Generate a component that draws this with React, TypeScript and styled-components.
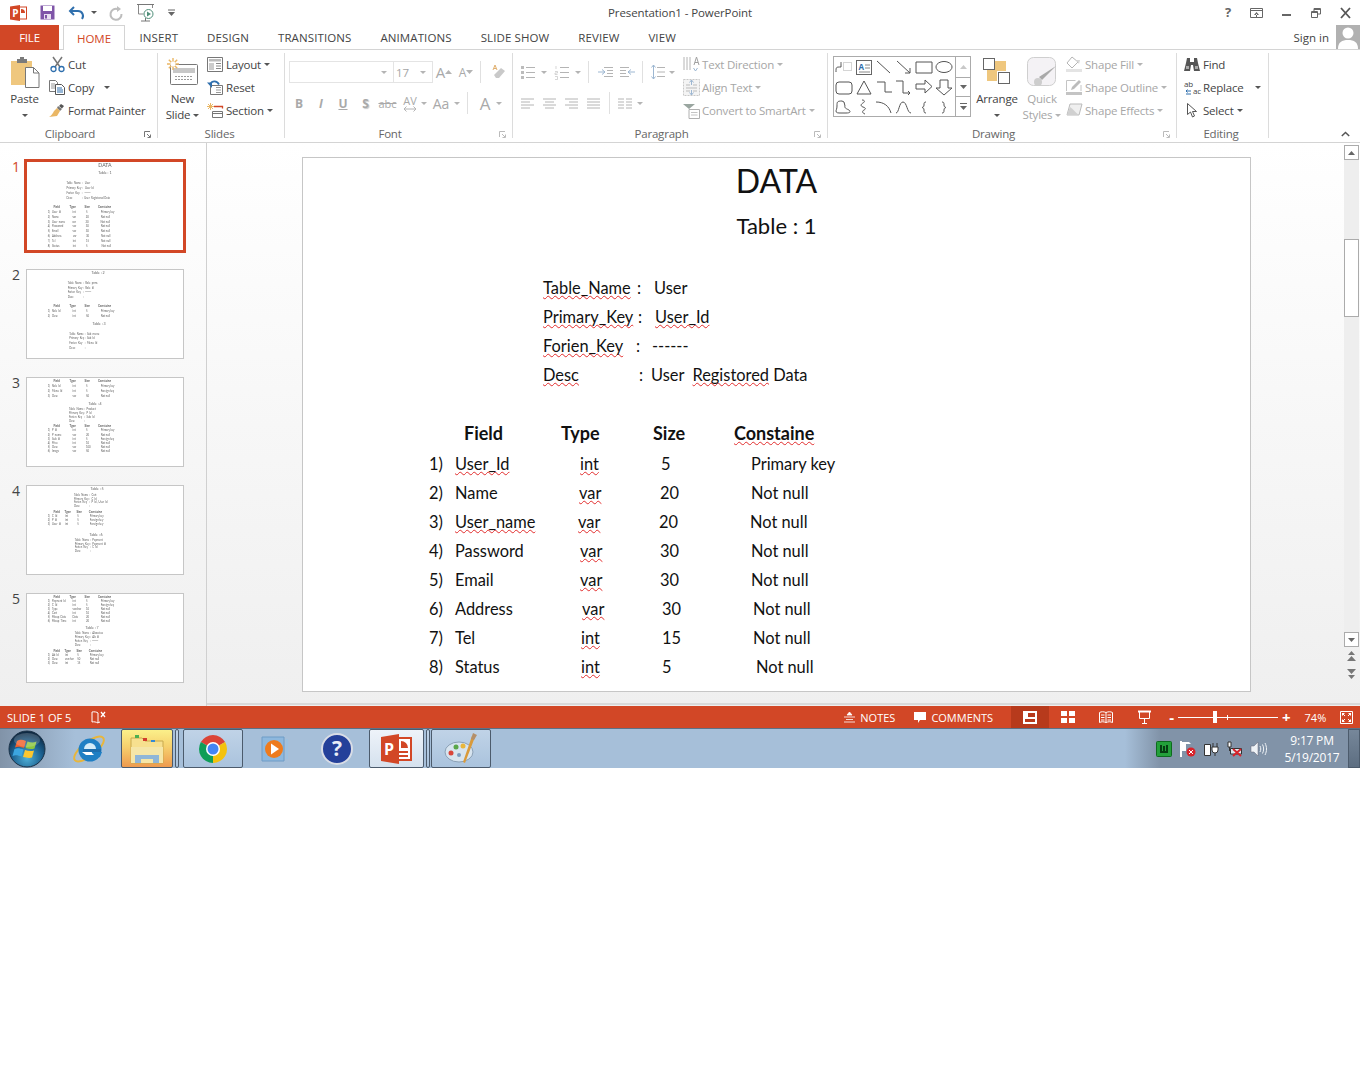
import React from "react";
import styled, { createGlobalStyle } from "styled-components";

const ORANGE = "#d24726";
const UI = `"Open Sans", "Noto Sans", "Liberation Sans", sans-serif`;
const DOC = `Lato, Carlito, "Liberation Sans", sans-serif`;

const Global = createGlobalStyle`
  html, body { margin: 0; padding: 0; background: #fff; }
  * { box-sizing: border-box; }
`;

const App = styled.div`
  width: 1360px;
  height: 768px;
  display: flex;
  flex-direction: column;
  overflow: hidden;
  font-family: ${UI};
  font-size: 11.5px;
  letter-spacing: -0.2px;
  color: #444;
  background: #fff;
`;

/* ---------- title bar ---------- */
const TitleBar = styled.div`
  height: 25px;
  display: grid;
  grid-template-columns: 1fr auto 1fr;
  align-items: center;
`;
const Qat = styled.div`
  display: flex;
  align-items: center;
  padding-left: 10px;
`;
const QatItem = styled.span<{ $w: number }>`
  width: ${(p) => p.$w}px;
  display: flex;
  align-items: center;
`;
const WindowTitle = styled.div`
  font-size: 11.5px;
  letter-spacing: -0.1px;
  color: #444;
`;
const WindowButtons = styled.div`
  display: flex;
  justify-content: flex-end;
  align-items: center;
  padding-right: 9px;
  gap: 19px;
`;

/* ---------- tabs ---------- */
const TabBar = styled.div`
  height: 25px;
  display: flex;
  border-bottom: 1px solid #d4d4d4;
`;
const FileTab = styled.div`
  width: 59px;
  height: 25px;
  background: ${ORANGE};
  color: #fff;
  display: flex;
  align-items: center;
  justify-content: center;
`;
const Tab = styled.div`
  height: 25px;
  padding: 0 14.5px;
  display: flex;
  align-items: center;
  letter-spacing: 0.1px;
`;
const ActiveTab = styled.div`
  width: 62px;
  height: 25px;
  margin-left: 4px;
  display: flex;
  align-items: center;
  justify-content: center;
  letter-spacing: 0;
  background: #fff;
  color: ${ORANGE};
  border: 1px solid #d4d4d4;
  border-bottom: 0;
`;
const SignIn = styled.div`
  margin-left: auto;
  display: flex;
  align-items: center;
  gap: 7px;
  height: 24px;
  letter-spacing: 0;
`;
const Avatar = styled.div`
  width: 24px;
  height: 24px;
  background: #b1b1b1;
`;

/* ---------- ribbon ---------- */
const Ribbon = styled.div`
  height: 93px;
  display: flex;
  align-items: flex-start;
  padding-top: 3px;
  border-bottom: 1px solid #d4d4d4;
`;
const Group = styled.div<{ $w: number }>`
  width: ${(p) => p.$w}px;
  height: 85px;
  border-right: 1px solid #dcdcdc;
  display: flex;
  flex-direction: column;
`;
const GroupBody = styled.div<{ $pad?: number }>`
  height: 75px;
  flex-shrink: 0;
  display: flex;
  padding-left: ${(p) => p.$pad ?? 0}px;
`;
const GroupFoot = styled.div`
  height: 12px;
  flex-shrink: 0;
  display: flex;
  align-items: center;
  padding-right: 3px;
`;
const GroupLabel = styled.div`
  flex: 1;
  text-align: center;
  line-height: 14px;
  color: #666;
`;
const Launcher = styled.span`
  width: 14px;
  display: flex;
  justify-content: center;
`;
const BigButton = styled.div<{ $w: number; $off?: boolean }>`
  width: ${(p) => p.$w}px;
  display: flex;
  flex-direction: column;
  align-items: center;
  color: ${(p) => (p.$off ? "#a6a6a6" : "#444")};
`;
const BigIcon = styled.div`
  height: 38px;
  display: flex;
  align-items: center;
  justify-content: center;
`;
const BigLine = styled.div`
  height: 16px;
  line-height: 16px;
  display: flex;
  align-items: center;
  gap: 3px;
  white-space: nowrap;
`;
const Stack = styled.div<{ $ml?: number }>`
  display: flex;
  flex-direction: column;
  margin-left: ${(p) => p.$ml ?? 0}px;
`;
const SmallButton = styled.div<{ $off?: boolean }>`
  height: 23px;
  display: flex;
  align-items: center;
  gap: 3px;
  white-space: nowrap;
  color: ${(p) => (p.$off ? "#a6a6a6" : "#444")};
`;
const IconBox = styled.span`
  width: 16px;
  height: 16px;
  display: flex;
  align-items: center;
  justify-content: center;
`;
const Caret = styled.span<{ $off?: boolean; $ml?: number }>`
  width: 0;
  height: 0;
  margin-left: ${(p) => p.$ml ?? 2}px;
  border-left: 3px solid transparent;
  border-right: 3px solid transparent;
  border-top: 3px solid ${(p) => (p.$off ? "#b4b4b4" : "#555")};
`;
const ToolColumn = styled.div<{ $w: number }>`
  width: ${(p) => p.$w}px;
  display: flex;
  flex-direction: column;
  padding-top: 8px;
  gap: 9px;
`;
const ToolRow = styled.div`
  height: 22px;
  display: flex;
  align-items: center;
`;
const FontBox = styled.div<{ $w: number }>`
  width: ${(p) => p.$w}px;
  height: 22px;
  border: 1px solid #e4e4e4;
  margin-right: -1px;
  display: flex;
  align-items: center;
  justify-content: space-between;
  padding: 0 6px 0 2px;
  color: #a6a6a6;
`;
const Slot = styled.span<{ $w: number; $ml?: number; $column?: boolean }>`
  width: ${(p) => p.$w}px;
  margin-left: ${(p) => p.$ml ?? 0}px;
  height: 22px;
  display: flex;
  flex-direction: ${(p) => (p.$column ? "column" : "row")};
  align-items: center;
  justify-content: center;
  color: #a9a9a9;
  font-weight: 600;
  flex-shrink: 0;
`;
const Glyph = styled.span<{
  $size?: number;
  $under?: boolean;
  $italic?: boolean;
  $strike?: boolean;
  $bold?: boolean;
  $shadow?: boolean;
  $tight?: boolean;
}>`
  font-size: ${(p) => p.$size ?? 12}px;
  font-style: ${(p) => (p.$italic ? "italic" : "normal")};
  font-weight: ${(p) => (p.$bold ? 700 : 400)};
  text-decoration: ${(p) => (p.$under ? "underline" : p.$strike ? "line-through" : "none")};
  text-shadow: ${(p) => (p.$shadow ? "1px 1px 1px #c8c8c8" : "none")};
  line-height: ${(p) => (p.$tight ? "11px" : "normal")};
  letter-spacing: 0;
`;
const ToolSep = styled.span<{ $mx: number }>`
  width: 1px;
  height: 22px;
  background: #e0e0e0;
  margin: 0 ${(p) => p.$mx}px;
  flex-shrink: 0;
`;
const Gallery = styled.div`
  margin: 3px 0 0 5px;
  width: 138px;
  height: 61px;
  border: 1px solid #ababab;
  display: flex;
`;
const ShapeGrid = styled.div`
  width: 121px;
  display: grid;
  grid-template-columns: repeat(6, 20px);
  grid-auto-rows: 20px;
`;
const ShapeCell = styled.span`
  display: flex;
  align-items: center;
  justify-content: center;
`;
const GalleryScroll = styled.div`
  flex: 1;
  display: grid;
  grid-template-rows: repeat(3, 1fr);
  border-left: 1px solid #ababab;
`;
const GalleryBtn = styled.span`
  display: flex;
  align-items: center;
  justify-content: center;
  & + & {
    border-top: 1px solid #ababab;
  }
`;
const Collapse = styled.div`
  margin-left: auto;
  height: 85px;
  padding: 0 10px 1px 0;
  display: flex;
  align-items: flex-end;
`;

/* ---------- main area ---------- */
const Main = styled.div`
  height: 563px;
  display: flex;
  background: linear-gradient(#fff, #efefef);
`;
const Sidebar = styled.div`
  width: 207px;
  border-right: 1px solid #d0d0d0;
  padding-top: 16px;
`;
const ThumbRow = styled.div`
  height: 108px;
  display: flex;
  align-items: flex-start;
`;
const ThumbNumber = styled.div<{ $on?: boolean }>`
  width: 24px;
  padding-left: 12px;
  font-size: 14px;
  line-height: 16px;
  letter-spacing: 0;
  color: ${(p) => (p.$on ? ORANGE : "#444")};
`;
const ThumbFrame = styled.div<{ $on?: boolean }>`
  background: #fff;
  overflow: hidden;
  margin: ${(p) => (p.$on ? "0" : "2px 0 0 2px")};
  width: ${(p) => (p.$on ? 162 : 158)}px;
  height: ${(p) => (p.$on ? 94 : 90)}px;
  border: ${(p) => (p.$on ? `3px solid ${ORANGE}` : "1px solid #c6c6c6")};
  --spell: transparent;
`;
const ThumbScale = styled.div`
  zoom: 0.1646;
  opacity: 0.7;
  filter: blur(1.6px);
`;
const Canvas = styled.div`
  flex: 1;
  display: flex;
  flex-direction: column;
`;
const CanvasRow = styled.div`
  height: 562px;
  display: flex;
  border-bottom: 2px solid #d9d9d9;
  padding-left: 95px;
`;
const SlideFrame = styled.div`
  margin-top: 14px;
  width: 949px;
  height: 535px;
  border: 1px solid #c6c6c6;
  background: #fff;
`;
const Slide = styled.div`
  width: 947px;
  height: 533px;
  overflow: hidden;
  font-family: ${DOC};
  color: #111;
  letter-spacing: 0;
  display: flex;
  flex-direction: column;
`;
const SlideTitle = styled.div`
  height: 46px;
  line-height: 46px;
  font-size: 32px;
  text-align: center;
  flex-shrink: 0;
`;
const Heading = styled.div<{ $top?: number; $shift?: number }>`
  height: 38px;
  line-height: 38px;
  font-size: 22px;
  text-align: center;
  flex-shrink: 0;
  margin-top: ${(p) => p.$top ?? 0}px;
  padding-right: ${(p) => p.$shift ?? 0}px;
`;
const Block = styled.div<{ $top: number; $left: number; $row?: number; $head?: number }>`
  margin-top: ${(p) => p.$top}px;
  padding-left: ${(p) => p.$left}px;
  display: grid;
  grid-auto-rows: ${(p) => p.$row ?? 29}px;
  grid-template-rows: ${(p) => (p.$head ? `${p.$head}px` : "none")};
  font-size: 16.4px;
  flex-shrink: 0;
`;
const MetaRow = styled.div`
  display: grid;
  grid-template-columns: 93px 12px 1fr;
  align-items: center;
  white-space: pre;
`;
const TableRow = styled.div<{ $isHead?: boolean; $narrow?: boolean }>`
  display: grid;
  grid-template-columns: ${(p) => (p.$narrow ? "26px 70px 78px 72px 1fr" : "26px 100px 97px 78px 1fr")};
  align-items: center;
  white-space: pre;
  font-weight: ${(p) => (p.$isHead ? 700 : 400)};
  font-size: ${(p) => (p.$isHead ? 18 : 16.4)}px;
`;
const Cell = styled.span<{ $nudge?: number }>`
  padding-left: ${(p) => p.$nudge ?? 0}px;
`;
const Spell = styled.span`
  text-decoration: underline wavy var(--spell, #e22c2c);
  text-decoration-thickness: 1px;
  text-decoration-skip-ink: none;
  text-underline-offset: 1px;
`;
const Scrollbar = styled.div`
  margin: 2px 0 0 auto;
  width: 16px;
  height: 558px;
  padding-right: 1px;
  display: flex;
  flex-direction: column;
`;
const ScrollBtn = styled.div<{ $plain?: boolean; $h?: number }>`
  height: ${(p) => p.$h ?? 15}px;
  flex-shrink: 0;
  display: flex;
  align-items: center;
  justify-content: center;
  background: ${(p) => (p.$plain ? "transparent" : "#fff")};
  border: ${(p) => (p.$plain ? "0" : "1px solid #ababab")};
`;
const ScrollTrack = styled.div<{ $h: number }>`
  height: ${(p) => p.$h}px;
  flex-shrink: 0;
  background: #eeeeee;
`;
const ScrollThumb = styled.div`
  height: 78px;
  flex-shrink: 0;
  background: #fff;
  border: 1px solid #ababab;
`;

/* ---------- status bar ---------- */
const StatusBar = styled.div`
  height: 22px;
  background: ${ORANGE};
  color: #fff;
  display: flex;
  align-items: center;
  font-size: 11px;
  letter-spacing: 0;
`;
const StatusItem = styled.div<{ $ml: number }>`
  margin-left: ${(p) => p.$ml}px;
  display: flex;
  align-items: center;
  gap: 5px;
  white-space: nowrap;
`;
const ViewButton = styled.div<{ $on?: boolean }>`
  width: 38px;
  height: 22px;
  display: flex;
  align-items: center;
  justify-content: center;
  background: ${(p) => (p.$on ? "#b73a1c" : "transparent")};
`;
const Views = styled.div`
  margin-left: 18px;
  display: flex;
`;
const ZoomTrack = styled.div`
  width: 100px;
  height: 1px;
  background: #fff;
  margin: 0 4px;
  display: flex;
  align-items: center;
`;
const ZoomThumb = styled.span`
  width: 4px;
  height: 12px;
  background: #fff;
  margin-left: 35px;
`;
const ZoomTick = styled.span`
  width: 1px;
  height: 5px;
  background: #fff;
  margin-left: 10px;
`;
const ZoomSign = styled.span`
  font-size: 15px;
  font-weight: 700;
  line-height: 12px;
`;

/* ---------- taskbar ---------- */
const Taskbar = styled.div`
  height: 40px;
  display: flex;
  align-items: stretch;
  background: linear-gradient(90deg, #8193a8 0, #a6bfd9 75px, #a6bfd9 1125px, #8193a8 1160px);
  border-top: 1px solid #5d7186;
`;
const TaskSlot = styled.div<{ $w: number; $ml?: number; $kind?: "plain" | "normal" | "active" | "light" }>`
  width: ${(p) => p.$w}px;
  margin-left: ${(p) => p.$ml ?? 0}px;
  display: flex;
  align-items: center;
  justify-content: center;
  border-radius: 2px;
  border: ${(p) => (p.$kind && p.$kind !== "plain" ? "1px solid #4c5b6c" : "0")};
  background: ${(p) =>
    p.$kind === "active"
      ? "linear-gradient(#fbf08a, #f6d06e 45%, #ee9a4e)"
      : p.$kind === "light"
        ? "linear-gradient(#eef3f9, #d5e1ee)"
        : p.$kind === "normal"
          ? "linear-gradient(#c0d3e7, #aac3dd)"
          : "transparent"};
`;
const Tray = styled.div`
  margin-left: auto;
  display: flex;
  align-items: center;
  gap: 8px;
`;
const Clock = styled.div`
  width: 72px;
  margin-left: 9px;
  text-align: center;
  font-size: 12px;
  line-height: 17px;
  letter-spacing: -0.2px;
  color: #fff;
  align-self: center;
`;
const ShowDesktop = styled.div`
  width: 12px;
  border: 1px solid #4c5b6c;
  background: linear-gradient(#76879a, #5d6e81);
`;

/* ---------- icons ---------- */
const Ico = styled.svg`
  display: block;
  flex-shrink: 0;
  overflow: visible;
`;

const PptSmall = () => (
  <Ico width="17" height="16" viewBox="0 0 17 16">
    <rect x="7" y="2" width="9.5" height="12" fill="#fff" stroke={ORANGE} />
    <path d="M11 4v4h4a4 4 0 0 0-4-4z" fill={ORANGE} />
    <path d="M0 1.5 10 0v16L0 14.5z" fill={ORANGE} />
    <text x="2.3" y="12" fontFamily={UI} fontSize="10" fontWeight="700" fill="#fff">P</text>
  </Ico>
);
const Save = () => (
  <Ico width="15" height="15" viewBox="0 0 15 15">
    <path d="M.5.500h14v14H.5z" fill="#7f55a8" />
    <rect x="3" y="1" width="9" height="5" fill="#fff" />
    <rect x="4" y="9" width="7" height="5" fill="#e8e0f0" />
    <rect x="5" y="10" width="2" height="3.5" fill="#7f55a8" />
  </Ico>
);
const Undo = () => (
  <Ico width="16" height="14" viewBox="0 0 16 14">
    <path d="M5 1 1 5l4 4" fill="none" stroke="#2f6fad" strokeWidth="2" />
    <path d="M2 5h7a5 5 0 0 1 4 8" fill="none" stroke="#2f6fad" strokeWidth="2" />
  </Ico>
);
const Redo = () => (
  <Ico width="14" height="14" viewBox="0 0 14 14">
    <path d="M9 3.2A5.5 5.5 0 1 0 12.5 8" fill="none" stroke="#bdbdbd" strokeWidth="2" />
    <path d="M8 0v6l4-3z" fill="#bdbdbd" />
  </Ico>
);
const Show = () => (
  <Ico width="17" height="18" viewBox="0 0 17 18">
    <path d="M0 .5h17" stroke="#777" />
    <path d="M1.500 1v9h5M15.500 1v3" stroke="#888" fill="none" />
    <circle cx="11.500" cy="10" r="4.500" fill="#fff" stroke="#4f8f79" />
    <path d="M10 7.500v5l4-2.500z" fill="#4f8f79" />
    <path d="M4 17h9M8.500 14v3" stroke="#777" />
  </Ico>
);
const QatMore = () => (
  <Ico width="7" height="7" viewBox="0 0 7 7">
    <path d="M0 1h7" stroke="#666" />
    <path d="M0 3h7L3.500 7z" fill="#666" />
  </Ico>
);
const HelpMark = styled.span`
  font-size: 13px;
  font-weight: 700;
  color: #666;
  line-height: 13px;
`;
const RibbonOpts = () => (
  <Ico width="13" height="10" viewBox="0 0 13 10">
    <path d="M.5.500h12v9H.5zM.5 2.500h12" fill="none" stroke="#666" />
    <path d="M6.500 4 4 7h5zM6 6h1v3H6z" fill="#666" />
  </Ico>
);
const Minimize = () => (
  <Ico width="10" height="10" viewBox="0 0 10 10"><path d="M0 6h9v2H0z" fill="#666" /></Ico>
);
const Restore = () => (
  <Ico width="10" height="10" viewBox="0 0 10 10">
    <path d="M.5 3.500h6v6h-6zM.5 4.500h6M3 3V.5h6.500V6H7M3 1.500h6.500" fill="none" stroke="#666" />
  </Ico>
);
const CloseX = () => (
  <Ico width="11" height="10" viewBox="0 0 11 10">
    <path d="m1 0 9 10M10 0 1 10" stroke="#555" strokeWidth="1.800" />
  </Ico>
);
const PasteIcon = () => (
  <Ico width="30" height="32" viewBox="0 0 30 32">
    <path d="M1 5h21v24H1z" fill="#efc77e" />
    <path d="M7 3h3V1h4v2h3v4H7z" fill="#7b7b7b" />
    <path d="M15.500 11.500h8l5.500 5.500v14.500H15.500z" fill="#fff" stroke="#777" />
    <path d="M23.500 11.500V17H29" fill="none" stroke="#777" />
  </Ico>
);
const CutIcon = () => (
  <Ico width="15" height="15" viewBox="0 0 15 15">
    <path d="M3 0l7 10M12 0 5 10" stroke="#777" strokeWidth="1.500" />
    <circle cx="3.500" cy="12" r="2.500" fill="none" stroke="#2f6fad" strokeWidth="1.300" />
    <circle cx="11.500" cy="12" r="2.500" fill="none" stroke="#2f6fad" strokeWidth="1.300" />
  </Ico>
);
const CopyIcon = () => (
  <Ico width="16" height="15" viewBox="0 0 16 15">
    <path d="M.5.500h6l2 2v9h-8z" fill="#fff" stroke="#777" />
    <path d="M6.500 4.500h6l3 3v7h-9z" fill="#fff" stroke="#555" />
    <path d="M8 8h5M8 10h6M8 12h6" stroke="#2f6fad" />
    <path d="M2 4h4M2 6h4M2 8h4" stroke="#999" />
  </Ico>
);
const PainterIcon = () => (
  <Ico width="16" height="15" viewBox="0 0 16 15">
    <path d="M9 3l4 3-2 2-3-3z" fill="#777" />
    <path d="M12 1l3 2-2 2.500-3-2.500z" fill="#555" />
    <path d="M8 5l3 3-3 5-8 1c2-1 4-4 5-6z" fill="#eab765" />
  </Ico>
);
const NewSlideIcon = () => (
  <Ico width="31" height="28" viewBox="0 0 31 28">
    <rect x="3.500" y="6.500" width="27" height="20" rx="1" fill="#fff" stroke="#777" />
    <rect x="6" y="10" width="22" height="5" fill="#c8c8c8" />
    <path d="M8 18.500h18M8 21.500h18" stroke="#9a9a9a" strokeDasharray="2 1" />
    <g stroke="#eab765" strokeWidth="1.400">
      <path d="M6 0v12M0 6h12M1.800 1.800l8.400 8.400M10.200 1.800l-8.400 8.400" />
    </g>
    <circle cx="6" cy="6" r="2.500" fill="#fff" />
  </Ico>
);
const LayoutIcon = () => (
  <Ico width="16" height="15" viewBox="0 0 16 15">
    <path d="M.5.500h15v14H.5z" fill="#fff" stroke="#777" />
    <path d="M2 2h12v2.500H2z" fill="#bbb" />
    <path d="M2 6h5v7H2z" fill="#ccc" />
    <path d="M9 6.500h5M9 9h5M9 11.500h5" stroke="#888" />
  </Ico>
);
const ResetIcon = () => (
  <Ico width="16" height="15" viewBox="0 0 16 15">
    <path d="M3.500 5.500h12v9h-12z" fill="#fff" stroke="#777" />
    <path d="M9 7.500h5M9 10h5M9 12.500h5" stroke="#999" />
    <path d="M12 4.500C10 .5 5 .5 3.500 4" fill="none" stroke="#2f6fad" strokeWidth="1.800" />
    <path d="M0 2.500l5 5.500V2.500z" fill="#2f6fad" />
  </Ico>
);
const SectionIcon = () => (
  <Ico width="16" height="15" viewBox="0 0 16 15">
    <g stroke="#eab765"><path d="M3.500 0v7M0 3.500h7M1 1l5 5M6 1 1 6" /></g>
    <path d="M7 3.500h8.500v2" fill="none" stroke={ORANGE} strokeWidth="1.300" />
    <path d="M5.500 8.500h10v6h-10zM5.500 10.500h10" fill="#fff" stroke="#777" />
  </Ico>
);
const EraserIcon = () => (
  <Ico width="15" height="16" viewBox="0 0 15 16">
    <path d="M3 11 10 4l4 3-6 7H5z" fill="#c9c9c9" />
    <path d="M2 6l2-5 2 5M3 4.500h2" fill="none" stroke="#e0b070" />
  </Ico>
);
const Lines = ({ kind }: { kind: "left" | "center" | "right" | "justify" }) => {
  const rows: Record<string, string> = {
    left: "M0 1h13M0 4h9M0 7h13M0 10h9",
    center: "M0 1h13M2 4h9M0 7h13M2 10h9",
    right: "M0 1h13M4 4h9M0 7h13M4 10h9",
    justify: "M0 1h13M0 4h13M0 7h13M0 10h13",
  };
  return (
    <Ico width="14" height="11" viewBox="0 0 14 11">
      <path d={rows[kind]} stroke="#b4b4b4" />
    </Ico>
  );
};
const Bullets = ({ numbered }: { numbered?: boolean }) => (
  <Ico width="14" height="15" viewBox="0 0 14 15">
    <path d="M5 2.500h9M5 7.500h9M5 12.500h9" stroke="#b4b4b4" />
    {numbered ? (
      <path d="M1 1v3M0 6.500h2.500V8H0v1.500h2.500M0 11.500h2.500v3H0" stroke="#c4c4c4" fill="none" strokeWidth=".7" />
    ) : (
      <path d="M0 1h3v3H0zM0 6h3v3H0zM0 11h3v3H0z" fill="#bcbcbc" />
    )}
  </Ico>
);
const IndentMark = styled(Ico)<{ $flip?: boolean }>`
  transform: ${(p) => (p.$flip ? "scaleX(-1)" : "none")};
`;
const Indent = ({ flip }: { flip?: boolean }) => (
  <IndentMark $flip={flip} width="15" height="12" viewBox="0 0 15 12">
    <path d="M6 1.500h9M9 4.500h6M9 7.500h6M6 10.500h9" stroke="#b4b4b4" />
    <path d="M0 6h7M4 3.500 7 6 4 8.500" fill="none" stroke="#9db7d2" />
  </IndentMark>
);
const Spacing = () => (
  <Ico width="14" height="16" viewBox="0 0 14 16">
    <path d="M6 3.500h8M6 8h8M6 12.500h8" stroke="#b4b4b4" />
    <path d="M2.500 1v14M.5 3.500l2-2.500 2 2.500M.5 12.500l2 2.500 2-2.500" fill="none" stroke="#9db7d2" />
  </Ico>
);
const ColumnsIcon = () => (
  <Ico width="14" height="11" viewBox="0 0 14 11">
    <path d="M0 1h6M8 1h6M0 4h6M8 4h6M0 7h6M8 7h6M0 10h6M8 10h6" stroke="#b4b4b4" />
  </Ico>
);
const SpreadArrow = () => (
  <Ico width="14" height="6" viewBox="0 0 14 6">
    <path d="M1 3h12M3.500 .5 1 3l2.500 2.500M10.500 .5 13 3l-2.500 2.500" fill="none" stroke="#b4b4b4" />
  </Ico>
);
const TextDirIcon = () => (
  <Ico width="17" height="17" viewBox="0 0 17 17">
    <path d="M1 1v13M4 1v13M7 1v13" stroke="#b4b4b4" />
    <path d="M11 9l2.500-8L16 9M12 6.500h3" fill="none" stroke="#a0a0a0" />
    <path d="M10.500 12l2 3 2-3" stroke="#9db7d2" fill="none" />
  </Ico>
);
const AlignIcon = () => (
  <Ico width="17" height="17" viewBox="0 0 17 17">
    <path d="M.5.500h16v16H.500z" fill="#f4f4f4" stroke="#c8c8c8" strokeDasharray="2 1" />
    <path d="M3 6h4M10 6h4M3 9h11M3 12h4M10 12h4" stroke="#bbb" />
    <path d="M8.500 1v5M6.500 3.500l2-2.500 2 2.500M8.500 16v-5M6.500 13.500l2 2.500 2-2.500" fill="none" stroke="#9db7d2" />
  </Ico>
);
const SmartArtIcon = () => (
  <Ico width="17" height="17" viewBox="0 0 17 17">
    <path d="M0 2h12l-6 5z" fill="#9aa6a0" />
    <path d="M6 7.500h10.500v9H6z" fill="#fff" stroke="#b0b0b0" />
    <path d="M8 10.500h6.500M8 13h6.500" stroke="#c4c4c4" />
  </Ico>
);
const shapes = [
  "M1 13c0-5 0-5 5-5 0-3 0-5 0-5M6 3",
  "",
  "M2 2l13 12",
  "M2 2l13 12M15 9v5h-5",
  "M1 3h16v11H1z",
  "M9 2.500a8 5.500 0 1 0 .01 0z",
  "M4 3h10q3 0 3 3v6q0 3-3 3H4q-3 0-3-3V6q0-3 3-3z",
  "M9 2l7 13H2z",
  "M2 3h8v10h7",
  "M1 2h7v12h7M13 12l2 2-2 2",
  "M1 5h9V1l7 6.500-7 6.500v-4H1z",
  "M5 1h8v8h4l-8 7-8-7h4z",
  "M7 2c-5 0-5 1-5 5 0 3-1 4-1 5 0 2 2 2 5 2h5c4 0 5-1 3-3-2-1-5-2-4-4l-1-4z",
  "M7 1c3 0 3 2 1 3s-3 3 0 4 3 2 1 3-2 3 1 4",
  "M1 3c8 0 13 4 15 11",
  "M1 14c3 0 3-11 7-11s4 11 8 11",
  "M11 3c-2 0-2 1-2 3s-1 2-2 2.500c1 .5 2 .5 2 2.500s0 3 2 3",
  "M7 3c2 0 2 1 2 3s1 2 2 2.500c-1 .5-2 .5-2 2.500s0 3-2 3",
];
const ShapeIcon = ({ d, idx }: { d: string; idx: number }) => (
  <Ico width="18" height="17" viewBox="0 0 18 17">
    {idx === 0 && <rect x="8.500" y="3.500" width="8" height="8" fill="none" stroke="#aaa" strokeDasharray="1 1" />}
    {idx === 1 ? (
      <>
        <rect x="1.500" y="1.500" width="15" height="14" fill="#fff" stroke="#666" />
        <text x="3.500" y="11" fontFamily={UI} fontSize="8" fontWeight="700" fill="#2f6fad">A</text>
        <path d="M10 6h5M10 9h5M4 13h11" stroke="#888" />
      </>
    ) : (
      <path d={d} fill="none" stroke="#555" />
    )}
  </Ico>
);
const Tri = ({ up, color = "#666", bar }: { up?: boolean; color?: string; bar?: boolean }) => (
  <Ico width="7" height={bar ? 7 : 4} viewBox={bar ? "0 0 7 7" : "0 0 7 4"}>
    {bar && <path d="M0 .5h7" stroke={color} />}
    <path d={bar ? "M0 3h7L3.500 7z" : up ? "M3.500 0 7 4H0z" : "M0 0h7L3.500 4z"} fill={color} />
  </Ico>
);
const ArrangeIcon = () => (
  <Ico width="28" height="28" viewBox="0 0 28 28">
    <rect x=".5" y=".5" width="11" height="11" fill="#fff" stroke="#666" />
    <path d="M12 3h11v10H12zM4 12h10v11H4z" fill="#efc77e" />
    <rect x="15.500" y="14.500" width="11" height="11" fill="#fff" stroke="#666" />
  </Ico>
);
const QuickIcon = () => (
  <Ico width="30" height="30" viewBox="0 0 30 30">
    <rect x=".5" y=".5" width="28" height="28" rx="6" fill="#f4f2f5" stroke="#cfcfcf" />
    <path d="M29 9 15 23l-3-3z" fill="#a9a9a9" />
    <circle cx="11" cy="25" r="4" fill="#cdcdcd" />
  </Ico>
);
const FillIcon = () => (
  <Ico width="17" height="17" viewBox="0 0 17 17">
    <path d="M6 1 1 7l5 5 6-6z" fill="#fff" stroke="#b4b4b4" />
    <path d="M10 4l3 4 1-4z" fill="#d8d8d8" />
    <rect y="13" width="16" height="3" fill="#e4e4e4" />
  </Ico>
);
const OutlineIcon = () => (
  <Ico width="17" height="17" viewBox="0 0 17 17">
    <path d="M.5 12V1.500h9M15 6v6" fill="none" stroke="#c4c4c4" />
    <path d="M13 1l2 2-7 7-3 1 1-3z" fill="#bcbcbc" />
    <rect y="13" width="16" height="3" fill="#c4c4c4" />
  </Ico>
);
const EffectsIcon = () => (
  <Ico width="17" height="17" viewBox="0 0 17 17">
    <path d="M4 2h12l-3 11H1z" fill="#efefef" stroke="#bbb" />
    <path d="M1 13 4 5c3 2 6 6 9 8z" fill="#d0d0d0" />
  </Ico>
);
const FindIcon = () => (
  <Ico width="16" height="15" viewBox="0 0 16 15">
    <path d="M3 1h3v4h4V1h3l1 5 2 8h-6l-1-6H7l-1 6H0l2-8z" fill="#555" />
    <path d="M2 9h3v3H2zM11 9h3v3h-3z" fill="#fff" opacity=".5" />
  </Ico>
);
const ReplaceIcon = () => (
  <Ico width="17" height="19" viewBox="0 0 17 19">
    <text x="0" y="9" fontFamily={UI} fontSize="8" fill="#444">ab</text>
    <text x="9" y="16" fontFamily={UI} fontSize="8" fill="#444">ac</text>
    <path d="M7 13H2M3.500 11.500 2 13l1.500 1.500M7 16H2" fill="none" stroke="#2f6fad" />
  </Ico>
);
const SelectIcon = () => (
  <Ico width="11" height="15" viewBox="0 0 11 15">
    <path d="M.5.500v11l3-2.500 2 5 2-1-2-4.500h4z" fill="#fff" stroke="#555" />
  </Ico>
);
const LauncherIcon = ({ off }: { off?: boolean }) => (
  <Ico width="7" height="7" viewBox="0 0 7 7">
    <path d="M.5 6V.5H6" fill="none" stroke={off ? "#bbb" : "#777"} />
    <path d="M3 3l3 3M3.500 6.500h3v-3" fill="none" stroke={off ? "#bbb" : "#777"} />
  </Ico>
);
const Chevron = () => (
  <Ico width="9" height="6" viewBox="0 0 9 6">
    <path d="M.8 5 4.500 1.500 8.200 5" fill="none" stroke="#555" strokeWidth="1.500" />
  </Ico>
);
const DoubleMark = styled(Ico)<{ $down?: boolean }>`
  transform: ${(p) => (p.$down ? "scaleY(-1)" : "none")};
`;
const DoubleArrow = ({ down }: { down?: boolean }) => (
  <DoubleMark $down={down} width="9" height="10" viewBox="0 0 9 10">
    <path d="M4.500 0 8 4H1zM4.500 5 9 10H0z" fill="#777" />
  </DoubleMark>
);
const SpellBook = () => (
  <Ico width="15" height="15" viewBox="0 0 15 15">
    <path d="M7 3C6 2 3 1.500 1 2v10c2-.5 4 0 6 1 .5-.5 1-.8 2-1M7 3v10" fill="none" stroke="#fff" />
    <path d="M10 2l4 5M14 2l-4 5" stroke="#fff" strokeWidth="1.300" />
  </Ico>
);
const NotesIcon = () => (
  <Ico width="11" height="11" viewBox="0 0 11 11">
    <path d="M5.500 0 8 3H3zM0 5h11M2 7.500h7M0 10h11" fill="#fff" stroke="#fff" strokeWidth=".8" />
  </Ico>
);
const CommentIcon = () => (
  <Ico width="12" height="11" viewBox="0 0 12 11"><path d="M0 0h12v8H6l-2 3V8H0z" fill="#fff" /></Ico>
);
const ViewNormal = () => (
  <Ico width="14" height="13" viewBox="0 0 14 13">
    <path d="M0 0h14v13H0z" fill="#fff" />
    <path d="M5 2h7v4H5zM2 8h10v3H2z" fill="#b73a1c" />
  </Ico>
);
const ViewSorter = () => (
  <Ico width="14" height="12" viewBox="0 0 14 12">
    <path d="M0 0h6v5H0zM8 0h6v5H8zM0 7h6v5H0zM8 7h6v5H8z" fill="#fff" />
  </Ico>
);
const ViewReading = () => (
  <Ico width="14" height="13" viewBox="0 0 14 13">
    <path d="M.5 1.500c2-1 4-1 6.500 0 2.500-1 4.500-1 6.500 0v10c-2-1-4-1-6.500 0-2.500-1-4.500-1-6.500 0zM7 1.500v10M2 4h3.500M2 6.500h3.500M2 9h3.500M8.500 4H12M8.500 6.500H12M8.500 9H12" fill="none" stroke="#fff" />
  </Ico>
);
const ViewShow = () => (
  <Ico width="13" height="13" viewBox="0 0 13 13">
    <path d="M0 .5h13" stroke="#fff" strokeWidth="2" />
    <path d="M1.500 1v6.500h10V1M6.500 8v4M4 12.500h5" fill="none" stroke="#fff" />
  </Ico>
);
const FitIcon = () => (
  <Ico width="13" height="13" viewBox="0 0 13 13">
    <path d="M.5.500h12v12H.5z" fill="none" stroke="#fff" />
    <path d="M3 3l2 2M10 3 8 5M3 10l2-2M10 10 8 8" stroke="#fff" />
    <path d="M2 2h3L2 5zM11 2H8l3 3zM2 11h3l-3-3zM11 11H8l3-3z" fill="#fff" />
  </Ico>
);
const Orb = () => (
  <Ico width="38" height="38" viewBox="0 0 38 38">
    <defs>
      <radialGradient id="orb" cx=".5" cy=".75" r=".7">
        <stop offset="0" stopColor="#4fb0d8" />
        <stop offset=".6" stopColor="#1b5f8e" />
        <stop offset="1" stopColor="#0e2a44" />
      </radialGradient>
    </defs>
    <circle cx="19" cy="19" r="18" fill="url(#orb)" stroke="#1b3146" />
    <path d="M9 11c3-2 6-1 9 0l-2 7c-3-1-6-2-9-.500z" fill="#f0602a" />
    <path d="M19.500 11.500c3 1 6 1.500 9 0l-2 7c-3 1-6 .500-9-.500z" fill="#8cc63f" />
    <path d="M6.500 19c3-1.500 6-.500 9 .500l-2 7c-3-1-6-2-9-.500z" fill="#3ca6e0" />
    <path d="M17 20c3 1 6 1.500 9 .500l-2 7c-3 1-6 0-9-.500z" fill="#fdc72e" />
    <ellipse cx="19" cy="10" rx="13" ry="7" fill="#fff" opacity=".18" />
  </Ico>
);
const IeIcon = () => (
  <Ico width="34" height="34" viewBox="0 0 34 34">
    <ellipse cx="17" cy="17" rx="18" ry="7" transform="rotate(-38 17 17)" fill="none" stroke="#e8b63c" strokeWidth="2" />
    <circle cx="18" cy="18" r="11.500" fill="#1f7fc4" />
    <circle cx="18" cy="17" r="6" fill="#d5ecf8" />
    <rect x="11" y="17" width="18" height="3" fill="#1d6eae" />
    <path d="M20 20h10l-2 5-8 3z" fill="#1f7fc4" />
    <path d="M10 20h9l3 3h-8z" fill="#fff" />
  </Ico>
);
const FolderIcon = () => (
  <Ico width="34" height="30" viewBox="0 0 34 30">
    <path d="M1 4h11l3 3h18v22H1z" fill="#f7e08f" stroke="#c8a94f" />
    <rect x="5" y="1" width="4" height="3" fill="#4caf50" />
    <rect x="13" y="4" width="4" height="3" fill="#d23c2c" />
    <rect x="21" y="6" width="4" height="2" fill="#3389d4" />
    <path d="M1 13h32v16H1z" fill="#f5e6a8" />
    <path d="M5 29V21h24v8h-6v-4H11v4z" fill="#8fb6d8" />
  </Ico>
);
const ChromeIcon = () => (
  <Ico width="30" height="30" viewBox="0 0 30 30">
    <path d="M15 15 2.880 8A14 14 0 0 1 27.120 8z" fill="#db4437" />
    <path d="M15 15 27.120 8A14 14 0 0 1 15 29z" fill="#f4c20d" />
    <path d="M15 15 15 29A14 14 0 0 1 2.880 8z" fill="#0f9d58" />
    <circle cx="15" cy="15" r="7" fill="#fff" />
    <circle cx="15" cy="15" r="5.500" fill="#4285f4" />
  </Ico>
);
const MediaIcon = () => (
  <Ico width="30" height="26" viewBox="0 0 30 26">
    <path d="M0 1h22v24H0z" fill="#8db8de" stroke="#6e9cc6" />
    <path d="M24 3h2v20h-2z" fill="#9dc1e0" />
    <circle cx="12" cy="13" r="9" fill="#ee7b1d" />
    <path d="M9 7.500v11l8-5.500z" fill="#fff" />
  </Ico>
);
const HelpIcon = () => (
  <Ico width="32" height="32" viewBox="0 0 32 32">
    <circle cx="16" cy="16" r="15" fill="#24409a" stroke="#d9dde6" strokeWidth="2" />
    <text x="16" y="23" textAnchor="middle" fontFamily={UI} fontSize="21" fontWeight="700" fill="#e8edf7">?</text>
  </Ico>
);
const PptIcon = () => (
  <Ico width="31" height="30" viewBox="0 0 31 30">
    <rect x="12" y="4" width="18" height="22" fill="#fff" stroke={ORANGE} strokeWidth="2" />
    <path d="M20 7v7h7a7 7 0 0 0-7-7z" fill={ORANGE} />
    <path d="M16 17h11v2H16zM16 21h11v2H16z" fill={ORANGE} />
    <path d="M0 3 18 0v30L0 27z" fill={ORANGE} />
    <text x="3" y="21" fontFamily={UI} fontSize="16" fontWeight="700" fill="#fff">P</text>
  </Ico>
);
const PaintIcon = () => (
  <Ico width="33" height="32" viewBox="0 0 33 32">
    <ellipse cx="14" cy="19" rx="14" ry="10" fill="#d7e4ef" stroke="#8aa0b5" />
    <circle cx="6" cy="20" r="2.500" fill="#d9453a" />
    <circle cx="11" cy="14" r="2.500" fill="#5aa74a" />
    <circle cx="18" cy="13" r="2.500" fill="#e8b63c" />
    <circle cx="14" cy="22" r="2" fill="#7a9cc0" />
    <path d="M30 4 20 30l-2-1L27 3z" fill="#d99a3a" />
    <path d="M26 6l2-6 4 2-3 5z" fill="#b48f6a" />
  </Ico>
);
const TrayW = () => (
  <Ico width="16" height="16" viewBox="0 0 16 16">
    <rect x=".5" y=".5" width="15" height="15" rx="1" fill="#23a03a" stroke="#0d6b1e" />
    <path d="M4 4v8h8V4h-2v6H9V5H7v5H6V4z" fill="#063d12" />
  </Ico>
);
const TrayFlag = () => (
  <Ico width="16" height="16" viewBox="0 0 16 16">
    <path d="M1 0v16" stroke="#fff" strokeWidth="2" />
    <path d="M2 1h7l2 2H6v7H2z" fill="#fff" />
    <circle cx="11" cy="11" r="4.500" fill="#d8232a" />
    <path d="m9 9 4 4M13 9l-4 4" stroke="#fff" />
  </Ico>
);
const TrayPower = () => (
  <Ico width="15" height="16" viewBox="0 0 15 16">
    <path d="M.5 3.500h6v11h-6z" fill="#fff" stroke="#333" />
    <path d="M8 6h6v3a3 3 0 0 1-6 0zM9 2v4M13 2v4M11 12v3" fill="#fff" stroke="#333" />
  </Ico>
);
const TrayNet = () => (
  <Ico width="16" height="16" viewBox="0 0 16 16">
    <path d="M1 1v5h3V1zM2.500 6v4" fill="#fff" stroke="#333" />
    <path d="M3.500 7.500h11V13h-11z" fill="#dfe7ee" stroke="#333" />
    <path d="m6 8 8 7M14 8l-8 7" stroke="#d8232a" strokeWidth="2" />
  </Ico>
);
const TrayVolume = () => (
  <Ico width="16" height="16" viewBox="0 0 16 16">
    <path d="M0 5h3l4-4v14l-4-4H0z" fill="#eef2f6" stroke="#667" strokeWidth=".5" />
    <path d="M9 5c1 2 1 4 0 6M11.500 3.500c1.500 3 1.500 6 0 9M14 2c2 4 2 8 0 12" fill="none" stroke="#eef2f6" />
  </Ico>
);

/* ---------- slide content ---------- */
const FLAGGED = /_|^int$|^var$|^Desc$|^Constaine$|^Registored$/;

const Words = ({ text }: { text: string }) => (
  <>
    {text.split(/(\s+)/).map((w, i) =>
      FLAGGED.test(w) ? <Spell key={i}>{w}</Spell> : <React.Fragment key={i}>{w}</React.Fragment>,
    )}
  </>
);

type Meta = [string, string, number?, number?];

const MetaBlock = ({ rows, top, left, row }: { rows: Meta[]; top: number; left: number; row?: number }) => (
  <Block $top={top} $left={left} $row={row}>
    {rows.map(([label, value, colon, val]) => (
      <MetaRow key={label}>
        <span><Words text={label} /></span>
        <Cell $nudge={colon ?? 1}>:</Cell>
        <Cell $nudge={val ?? 2}><Words text={value} /></Cell>
      </MetaRow>
    ))}
  </Block>
);

type Field = { n: string; f: string; t: string; s: string; c: string; at?: [number, number, number] };

const TableBlock = ({ rows, top, left, row = 29, narrow }: { rows: Field[]; top: number; left: number; row?: number; narrow?: boolean }) => (
  <Block $top={top} $left={left} $row={row} $head={row + 4}>
    <TableRow $isHead $narrow={narrow}>
      <span />
      <Cell $nudge={9}>Field</Cell>
      <Cell $nudge={6}>Type</Cell>
      <Cell $nudge={1}>Size</Cell>
      <Cell $nudge={4}><Words text="Constaine" /></Cell>
    </TableRow>
    {rows.map((r) => {
      const at = r.at ?? (narrow ? [9, 5, 10] : [25, 9, 21]);
      return (
        <TableRow key={r.n + r.f} $narrow={narrow}>
          <span>{r.n}</span>
          <span><Words text={r.f} /></span>
          <Cell $nudge={at[0]}><Words text={r.t} /></Cell>
          <Cell $nudge={at[1]}>{r.s}</Cell>
          <Cell $nudge={at[2]}>{r.c}</Cell>
        </TableRow>
      );
    })}
  </Block>
);

const row = (n: number, f: string, t: string, s: string, c: string, at?: [number, number, number]): Field => ({
  n: `${n})`, f, t, s, c, at,
});

const UserFields: Field[] = [
  row(1, "User_Id", "int", "5", "Primary key", [25, 9, 21]),
  row(2, "Name", "var", "20", "Not null", [24, 8, 21]),
  row(3, "User_name", "var", "20", "Not null", [23, 7, 20]),
  row(4, "Password", "var", "30", "Not null", [25, 8, 21]),
  row(5, "Email", "var", "30", "Not null", [25, 8, 21]),
  row(6, "Address", "var", "30", "Not null", [27, 10, 23]),
  row(7, "Tel", "int", "15", "Not null", [26, 10, 23]),
  row(8, "Status", "int", "5", "Not null", [26, 10, 26]),
];

const SlideOne = () => (
  <Slide>
    <SlideTitle>DATA</SlideTitle>
    <Heading $top={3}>Table : 1</Heading>
    <MetaBlock
      top={28}
      left={240}
      rows={[
        ["Table_Name", "User", 1, 6],
        ["Primary_Key", "User_Id", 2, 7],
        ["Forien_Key", "------", 0, 4],
        ["Desc", "User  Registored Data", 3, 3],
      ]}
    />
    <TableBlock top={27} left={126} rows={UserFields} />
  </Slide>
);
const SlideTwo = () => (
  <Slide>
    <Heading $shift={84}>Table : 2</Heading>
    <MetaBlock top={26} left={247} rows={[["Table_Name", "Role_prms"], ["Primary_Key", "Role_Id"], ["Forien_Key", "------"], ["Desc", ""]]} />
    <TableBlock top={24} left={126} rows={[row(1, "Role_Id", "int", "5", "Primary key"), row(2, "Desc", "int", "50", "Not null")]} />
    <Heading $top={18} $shift={72}>Table : 3</Heading>
    <MetaBlock top={22} left={257} rows={[["Table_Name", "Sub_menu"], ["Primary_Key", "Sub_Id"], ["Forien_Key", "Menu_Id"], ["Desc", ""]]} />
  </Slide>
);
const SlideThree = () => (
  <Slide>
    <TableBlock top={4} left={126} rows={[row(1, "Role_Id", "int", "5", "Primary key"), row(2, "Menu_Id", "int", "5", "Foreign key"), row(3, "Desc", "var", "50", "Not null")]} />
    <Heading $top={14} $shift={120}>Table : 4</Heading>
    <MetaBlock top={0} left={255} row={24} rows={[["Table_Name", "Product"], ["Primary_Key", "P_Id"], ["Forien_Key", "Sub_Id"], ["Desc", ""]]} />
    <TableBlock top={6} left={126} row={25} rows={[row(1, "P_Id", "int", "5", "Primary key"), row(2, "P_name", "var", "20", "Not null"), row(3, "Sub_Id", "int", "5", "Foreign key"), row(4, "Price", "int", "10", "Not null"), row(5, "Desc", "var", "100", "Not null"), row(6, "Image", "var", "50", "Not null")]} />
  </Slide>
);
const SlideFour = () => (
  <Slide>
    <Heading $shift={96}>Table : 5</Heading>
    <MetaBlock top={6} left={285} row={22} rows={[["Table_Name", "Cart"], ["Primary_Key", "C_Id"], ["Forien_Key", "P_Id , User_Id"], ["Desc", ""]]} />
    <TableBlock top={14} left={126} row={23} narrow rows={[row(1, "C_Id", "int", "5", "Primary key"), row(2, "P_Id", "int", "5", "Foreign key"), row(3, "User_Id", "int", "5", "Foreign key")]} />
    <Heading $top={36} $shift={108}>Table : 6</Heading>
    <MetaBlock top={0} left={290} row={22} rows={[["Table_Name", "Payment"], ["Primary_Key", "Payment_Id"], ["Forien_Key", "C_Id"], ["Desc", ""]]} />
  </Slide>
);
const SlideFive = () => (
  <Slide>
    <TableBlock top={4} left={126} row={24} rows={[row(1, "Payment_Id", "int", "5", "Primary key"), row(2, "C_Id", "int", "5", "Foreign key"), row(3, "Type", "varchar", "10", "Not null"), row(4, "Cart", "int", "10", "Not null"), row(5, "Pdcup_Date", "Date", "20", "Not null"), row(6, "Pdcup_Time", "int", "20", "Not null")]} />
    <Heading $top={14} $shift={156}>Table : 7</Heading>
    <MetaBlock top={0} left={290} row={23} rows={[["Table_Name", "About us"], ["Primary_Key", "Ab_Id"], ["Forien_Key", "------"], ["Desc", ""]]} />
    <TableBlock top={14} left={126} row={24} narrow rows={[row(1, "Ab_Id", "int", "5", "Primary key"), row(2, "Desc", "varchar", "50", "Not null"), row(3, "Desc", "int", "15", "Not null")]} />
  </Slide>
);

const thumbs = [SlideOne, SlideTwo, SlideThree, SlideFour, SlideFive];
const tabs = ["INSERT", "DESIGN", "TRANSITIONS", "ANIMATIONS", "SLIDE SHOW", "REVIEW", "VIEW"];

const PowerPointWindow: React.FC = () => (
  <App>
    <TitleBar>
      <Qat>
        <QatItem $w={30}><PptSmall /></QatItem>
        <QatItem $w={29}><Save /></QatItem>
        <QatItem $w={40}><Undo /><Caret $ml={6} /></QatItem>
        <QatItem $w={28}><Redo /></QatItem>
        <QatItem $w={31}><Show /></QatItem>
        <QatMore />
      </Qat>
      <WindowTitle>Presentation1 - PowerPoint</WindowTitle>
      <WindowButtons>
        <HelpMark>?</HelpMark>
        <RibbonOpts />
        <Minimize />
        <Restore />
        <CloseX />
      </WindowButtons>
    </TitleBar>

    <TabBar>
      <FileTab>FILE</FileTab>
      <ActiveTab>HOME</ActiveTab>
      {tabs.map((t) => (
        <Tab key={t}>{t}</Tab>
      ))}
      <SignIn>
        Sign in
        <Avatar>
          <Ico width="24" height="24" viewBox="0 0 24 24">
            <circle cx="12" cy="8" r="5.500" fill="#fff" />
            <path d="M2 24c0-7 4-9 10-9s10 2 10 9z" fill="#fff" />
          </Ico>
        </Avatar>
      </SignIn>
    </TabBar>

    <Ribbon>
      <Group $w={158}>
        <GroupBody>
          <BigButton $w={49}>
            <BigIcon><PasteIcon /></BigIcon>
            <BigLine>Paste</BigLine>
            <BigLine><Caret $ml={0} /></BigLine>
          </BigButton>
          <Stack>
            <SmallButton><IconBox><CutIcon /></IconBox>Cut</SmallButton>
            <SmallButton><IconBox><CopyIcon /></IconBox>Copy<Caret $ml={7} /></SmallButton>
            <SmallButton><IconBox><PainterIcon /></IconBox>Format Painter</SmallButton>
          </Stack>
        </GroupBody>
        <GroupFoot>
          <GroupLabel>Clipboard</GroupLabel>
          <Launcher><LauncherIcon /></Launcher>
        </GroupFoot>
      </Group>

      <Group $w={127}>
        <GroupBody>
          <BigButton $w={49}>
            <BigIcon><NewSlideIcon /></BigIcon>
            <BigLine>New</BigLine>
            <BigLine>Slide<Caret $ml={0} /></BigLine>
          </BigButton>
          <Stack>
            <SmallButton><IconBox><LayoutIcon /></IconBox>Layout<Caret $ml={0} /></SmallButton>
            <SmallButton><IconBox><ResetIcon /></IconBox>Reset</SmallButton>
            <SmallButton><IconBox><SectionIcon /></IconBox>Section<Caret $ml={0} /></SmallButton>
          </Stack>
        </GroupBody>
        <GroupFoot>
          <GroupLabel>Slides</GroupLabel>
        </GroupFoot>
      </Group>

      <Group $w={228}>
        <GroupBody $pad={4}>
          <ToolColumn $w={224}>
            <ToolRow>
              <FontBox $w={105}><span /><Caret $off /></FontBox>
              <FontBox $w={40}>17<Caret $off /></FontBox>
              <Slot $w={24}><Glyph $size={15}>A</Glyph><Tri up color="#b4b4b4" /></Slot>
              <Slot $w={20}><Glyph $size={12}>A</Glyph><Tri color="#b4b4b4" /></Slot>
              <ToolSep $mx={4} />
              <Slot $w={26}><EraserIcon /></Slot>
            </ToolRow>
            <ToolRow>
              <Slot $w={20}><Glyph $bold>B</Glyph></Slot>
              <Slot $w={22} $ml={1}><Glyph $italic $bold>I</Glyph></Slot>
              <Slot $w={22}><Glyph $under $bold>U</Glyph></Slot>
              <Slot $w={23}><Glyph $bold $shadow>S</Glyph></Slot>
              <Slot $w={21}><Glyph $size={11} $strike>abc</Glyph></Slot>
              <Slot $w={24} $column><Glyph $size={11} $tight>AV</Glyph><SpreadArrow /></Slot>
              <Caret $off $ml={-1} />
              <Slot $w={28}><Glyph $size={14}>Aa</Glyph></Slot>
              <Caret $off $ml={-1} />
              <ToolSep $mx={7} />
              <Slot $w={22} $ml={-1}><Glyph $size={17}>A</Glyph></Slot>
              <Caret $off $ml={0} />
            </ToolRow>
          </ToolColumn>
        </GroupBody>
        <GroupFoot>
          <GroupLabel>Font</GroupLabel>
          <Launcher><LauncherIcon off /></Launcher>
        </GroupFoot>
      </Group>

      <Group $w={315}>
        <GroupBody $pad={8}>
          <ToolColumn $w={162}>
            <ToolRow>
              <Slot $w={14}><Bullets /></Slot>
              <Caret $off $ml={6} />
              <Slot $w={14} $ml={8}><Bullets numbered /></Slot>
              <Caret $off $ml={6} />
              <ToolSep $mx={7} />
              <Slot $w={18}><Indent /></Slot>
              <Slot $w={18} $ml={4}><Indent flip /></Slot>
              <ToolSep $mx={6} />
              <Slot $w={18}><Spacing /></Slot>
              <Caret $off $ml={2} />
            </ToolRow>
            <ToolRow>
              <Slot $w={14}><Lines kind="left" /></Slot>
              <Slot $w={14} $ml={8}><Lines kind="center" /></Slot>
              <Slot $w={14} $ml={8}><Lines kind="right" /></Slot>
              <Slot $w={14} $ml={8}><Lines kind="justify" /></Slot>
              <ToolSep $mx={8} />
              <Slot $w={14}><ColumnsIcon /></Slot>
              <Caret $off $ml={5} />
            </ToolRow>
          </ToolColumn>
          <Stack>
            <SmallButton $off><IconBox><TextDirIcon /></IconBox>Text Direction<Caret $off $ml={0} /></SmallButton>
            <SmallButton $off><IconBox><AlignIcon /></IconBox>Align Text<Caret $off $ml={0} /></SmallButton>
            <SmallButton $off><IconBox><SmartArtIcon /></IconBox>Convert to SmartArt<Caret $off $ml={0} /></SmallButton>
          </Stack>
        </GroupBody>
        <GroupFoot>
          <GroupLabel>Paragraph</GroupLabel>
          <Launcher><LauncherIcon off /></Launcher>
        </GroupFoot>
      </Group>

      <Group $w={349}>
        <GroupBody>
          <Gallery>
            <ShapeGrid>
              {shapes.map((d, i) => (
                <ShapeCell key={i}><ShapeIcon d={d} idx={i} /></ShapeCell>
              ))}
            </ShapeGrid>
            <GalleryScroll>
              <GalleryBtn><Tri up color="#c8c8c8" /></GalleryBtn>
              <GalleryBtn><Tri /></GalleryBtn>
              <GalleryBtn><Tri bar /></GalleryBtn>
            </GalleryScroll>
          </Gallery>
          <BigButton $w={52}>
            <BigIcon><ArrangeIcon /></BigIcon>
            <BigLine>Arrange</BigLine>
            <BigLine><Caret $ml={0} /></BigLine>
          </BigButton>
          <BigButton $w={38} $off>
            <BigIcon><QuickIcon /></BigIcon>
            <BigLine>Quick</BigLine>
            <BigLine>Styles<Caret $off $ml={0} /></BigLine>
          </BigButton>
          <Stack $ml={5}>
            <SmallButton $off><IconBox><FillIcon /></IconBox>Shape Fill<Caret $off $ml={0} /></SmallButton>
            <SmallButton $off><IconBox><OutlineIcon /></IconBox>Shape Outline<Caret $off $ml={0} /></SmallButton>
            <SmallButton $off><IconBox><EffectsIcon /></IconBox>Shape Effects<Caret $off $ml={0} /></SmallButton>
          </Stack>
        </GroupBody>
        <GroupFoot>
          <GroupLabel>Drawing</GroupLabel>
          <Launcher><LauncherIcon off /></Launcher>
        </GroupFoot>
      </Group>

      <Group $w={92}>
        <GroupBody $pad={7}>
          <Stack>
            <SmallButton><IconBox><FindIcon /></IconBox>Find</SmallButton>
            <SmallButton><IconBox><ReplaceIcon /></IconBox>Replace<Caret $ml={9} /></SmallButton>
            <SmallButton><IconBox><SelectIcon /></IconBox>Select<Caret $ml={0} /></SmallButton>
          </Stack>
        </GroupBody>
        <GroupFoot>
          <GroupLabel>Editing</GroupLabel>
        </GroupFoot>
      </Group>

      <Collapse><Chevron /></Collapse>
    </Ribbon>

    <Main>
      <Sidebar>
        {thumbs.map((Content, i) => (
          <ThumbRow key={i}>
            <ThumbNumber $on={i === 0}>{i + 1}</ThumbNumber>
            <ThumbFrame $on={i === 0}>
              <ThumbScale><Content /></ThumbScale>
            </ThumbFrame>
          </ThumbRow>
        ))}
      </Sidebar>
      <Canvas>
        <CanvasRow>
          <SlideFrame>
            <SlideOne />
          </SlideFrame>
          <Scrollbar>
            <ScrollBtn><Tri up /></ScrollBtn>
            <ScrollTrack $h={79} />
            <ScrollThumb />
            <ScrollTrack $h={315} />
            <ScrollBtn><Tri /></ScrollBtn>
            <ScrollBtn $plain $h={18}><DoubleArrow /></ScrollBtn>
            <ScrollBtn $plain $h={18}><DoubleArrow down /></ScrollBtn>
          </Scrollbar>
        </CanvasRow>
      </Canvas>
    </Main>

    <StatusBar>
      <StatusItem $ml={7}>SLIDE 1 OF 5</StatusItem>
      <StatusItem $ml={20}><SpellBook /></StatusItem>
      <StatusItem $ml={738}><NotesIcon />NOTES</StatusItem>
      <StatusItem $ml={19}><CommentIcon />COMMENTS</StatusItem>
      <Views>
        <ViewButton $on><ViewNormal /></ViewButton>
        <ViewButton><ViewSorter /></ViewButton>
        <ViewButton><ViewReading /></ViewButton>
        <ViewButton><ViewShow /></ViewButton>
      </Views>
      <StatusItem $ml={6}>
        <ZoomSign>-</ZoomSign>
      </StatusItem>
      <ZoomTrack>
        <ZoomThumb />
        <ZoomTick />
      </ZoomTrack>
      <ZoomSign>+</ZoomSign>
      <StatusItem $ml={14}>74%</StatusItem>
      <StatusItem $ml={14}><FitIcon /></StatusItem>
    </StatusBar>

    <Taskbar>
      <TaskSlot $w={54}><Orb /></TaskSlot>
      <TaskSlot $w={60} $ml={5}><IeIcon /></TaskSlot>
      <TaskSlot $w={52} $ml={2} $kind="active"><FolderIcon /></TaskSlot>
      <TaskSlot $w={4} $ml={2} $kind="normal" />
      <TaskSlot $w={60} $ml={4} $kind="normal"><ChromeIcon /></TaskSlot>
      <TaskSlot $w={60} $ml={4}><MediaIcon /></TaskSlot>
      <TaskSlot $w={60}><HelpIcon /></TaskSlot>
      <TaskSlot $w={55} $ml={2} $kind="light"><PptIcon /></TaskSlot>
      <TaskSlot $w={4} $ml={2} $kind="normal" />
      <TaskSlot $w={60} $ml={1} $kind="normal"><PaintIcon /></TaskSlot>
      <Tray>
        <TrayW />
        <TrayFlag />
        <TrayPower />
        <TrayNet />
        <TrayVolume />
      </Tray>
      <Clock>
        9:17 PM
        <br />
        5/19/2017
      </Clock>
      <ShowDesktop />
    </Taskbar>
  </App>
);

export default function Root() {
  return (
    <>
      <Global />
      <PowerPointWindow />
    </>
  );
}
